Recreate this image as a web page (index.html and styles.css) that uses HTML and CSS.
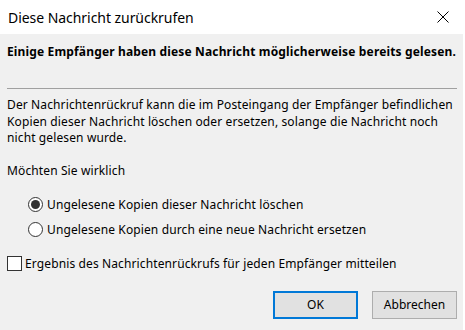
FILE: index.html
```html
<!DOCTYPE html>
<html lang="de">
<head>
<meta charset="utf-8">
<title>Diese Nachricht zurückrufen</title>
<link rel="stylesheet" href="styles.css">
</head>
<body>
<div class="window">
  <div class="titlebar">
    <span class="title">Diese Nachricht zurückrufen</span>
    <svg class="close" width="12" height="12" viewBox="0 0 12 12"><path d="M0.5 0.5 L11.5 11.5 M11.5 0.5 L0.5 11.5" stroke="#000" stroke-width="1" fill="none"/></svg>
  </div>
  <div class="content">
    <div class="warning">Einige Empfänger haben diese Nachricht möglicherweise bereits gelesen.</div>
    <div class="sep"></div>
    <p class="desc">Der Nachrichtenrückruf kann die im Posteingang der Empfänger befindlichen Kopien dieser Nachricht löschen oder ersetzen, solange die Nachricht noch nicht gelesen wurde.</p>
    <p class="question">Möchten Sie wirklich</p>
    <div class="options">
      <div class="opt"><span class="radio checked"></span><span>Ungelesene Kopien dieser Nachricht löschen</span></div>
      <div class="opt"><span class="radio"></span><span>Ungelesene Kopien durch eine neue Nachricht ersetzen</span></div>
    </div>
    <div class="check"><span class="box"></span><span>Ergebnis des Nachrichtenrückrufs für jeden Empfänger mitteilen</span></div>
    <div class="buttons">
      <div class="btn primary">OK</div>
      <div class="btn">Abbrechen</div>
    </div>
  </div>
</div>
</body>
</html>
```
FILE: styles.css
```css
* { box-sizing: border-box; }
html, body { margin: 0; padding: 0; background: #fff; }
body { font-family: "Noto Sans", "Open Sans", sans-serif; color: #000; font-size: 12px; letter-spacing: 0.12px; }
.window { width: 465px; height: 330px; display: flex; flex-direction: column; }
.titlebar { height: 34px; background: #fff; display: flex; align-items: center; justify-content: space-between; padding: 0 16px 0 8px; }
.title { font-size: 14px; color: #000; letter-spacing: -0.05px; }
.close { display: block; margin-top: -1px; }
.content { flex: 1; background: #f0f0f0; margin-right: 2px; padding: 10px 0 0 7px; display: flex; flex-direction: column; }
.warning { font-weight: bold; line-height: 16px; height: 16px; white-space: nowrap; letter-spacing: 0.15px; }
.sep { height: 1px; background: #a0a0a0; width: 450px; margin-top: 28px; }
.desc { margin: 8px 0 0; line-height: 16.5px; width: 456px; }
.question { margin: 16.5px 0 0; line-height: 16.5px; }
.options { margin-top: 17px; padding-left: 21px; display: flex; flex-direction: column; gap: 10px; }
.opt { display: flex; align-items: center; gap: 4px; height: 15px; }
.radio { width: 15px; height: 15px; border: 1px solid #333; border-radius: 50%; background: #fff; display: flex; align-items: center; justify-content: center; }
.radio.checked::after { content: ""; width: 9px; height: 9px; border-radius: 50%; background: #333; }
.check { margin-top: 19px; display: flex; align-items: center; gap: 3px; height: 15px; }
.box { width: 15px; height: 15px; border: 1px solid #333; background: #fff; }
.buttons { margin-top: 20px; display: flex; justify-content: flex-end; gap: 14px; padding-right: 6px; }
.btn { width: 85px; height: 28px; border: 1px solid #adadad; background: #e1e1e1; display: flex; align-items: center; justify-content: center; letter-spacing: 0; }
.btn.primary { border: 2px solid #0078d7; }
```
